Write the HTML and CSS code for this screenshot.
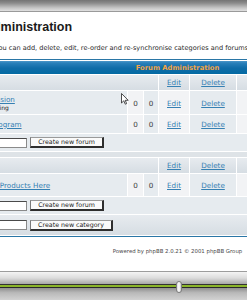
FILE: index.html
```html
<!DOCTYPE html>
<html>
<head>
<meta charset="utf-8">
<title>Forum Administration</title>
<link rel="stylesheet" href="styles.css">
</head>
<body>
<div class="screen">
  <div class="topbar"></div>
  <div class="viewport">
    <div class="page">
      <h1 class="title">Forum Administration</h1>
      <p class="intro">From this panel you can add, delete, edit, re-order and re-synchronise categories and forums in your board</p>
      <table class="forumline">
        <colgroup>
          <col class="c-name"><col class="c-num"><col class="c-num2"><col class="c-edit"><col class="c-del"><col class="c-move"><col class="c-sync">
        </colgroup>
        <tr><th colspan="7">Forum Administration</th></tr>
        <tr class="cat">
          <td colspan="3" class="cat-title"><a href="#">General</a></td>
          <td class="center"><a href="#">Edit</a></td>
          <td class="center"><a href="#">Delete</a></td>
          <td class="center"><a href="#">Move up</a> <a href="#">Move down</a></td>
          <td>&nbsp;</td>
        </tr>
        <tr class="forum forum-a">
          <td class="row2"><a href="#" class="fname">General Discussion</a><span class="fdesc">Chat and advertising</span></td>
          <td class="row1 center num">0</td>
          <td class="row2 center num">0</td>
          <td class="row1 center"><a href="#">Edit</a></td>
          <td class="row2 center"><a href="#">Delete</a></td>
          <td class="row1 center"><a href="#">Move up</a><br><a href="#">Move down</a></td>
          <td class="row2 center"><a href="#">Resync</a></td>
        </tr>
        <tr class="forum forum-b">
          <td class="row2"><a href="#" class="fname">Our Affiliate Program</a></td>
          <td class="row1 center num">0</td>
          <td class="row2 center num">0</td>
          <td class="row1 center"><a href="#">Edit</a></td>
          <td class="row2 center"><a href="#">Delete</a></td>
          <td class="row1 center"><a href="#">Move up</a> <a href="#">Move down</a></td>
          <td class="row2 center"><a href="#">Resync</a></td>
        </tr>
        <tr class="add-row">
          <td colspan="7" class="row2"><div class="addform"><input class="post" type="text"><button class="liteoption btn-forum" type="button">Create new forum</button></div></td>
        </tr>
        <tr class="space-row"><td colspan="7"></td></tr>
        <tr class="cat">
          <td colspan="3" class="cat-title"><a href="#">Shop</a></td>
          <td class="center"><a href="#">Edit</a></td>
          <td class="center"><a href="#">Delete</a></td>
          <td class="center"><a href="#">Move up</a> <a href="#">Move down</a></td>
          <td>&nbsp;</td>
        </tr>
        <tr class="forum forum-c">
          <td class="row2"><a href="#" class="fname">Buy and Trade Products Here</a></td>
          <td class="row1 center num">0</td>
          <td class="row2 center num">0</td>
          <td class="row1 center"><a href="#">Edit</a></td>
          <td class="row2 center"><a href="#">Delete</a></td>
          <td class="row1 center"><a href="#">Move up</a><br><a href="#">Move down</a></td>
          <td class="row2 center"><a href="#">Resync</a></td>
        </tr>
        <tr class="add-row">
          <td colspan="7" class="row2"><div class="addform"><input class="post" type="text"><button class="liteoption btn-forum" type="button">Create new forum</button></div></td>
        </tr>
        <tr class="cat-bottom">
          <td colspan="7"><div class="addform"><input class="post" type="text"><button class="liteoption btn-cat" type="button">Create new category</button></div></td>
        </tr>
      </table>
      <div class="copyright">Powered by phpBB 2.0.21 © 2001 phpBB Group</div>
    </div>
    <svg class="cursor" width="8" height="12" viewBox="0 0 8 12">
      <path d="M0.5 0.5 L0.5 10 L2.8 7.8 L4.3 11.2 L5.6 10.6 L4.2 7.3 L7.2 7.3 Z" fill="#fff" stroke="#222" stroke-width="0.8" stroke-linejoin="round"/>
    </svg>
  </div>
  <div class="player">
    <div class="player-top"></div>
    <div class="track"></div>
    <div class="player-bottom"></div>
    <div class="knob"></div>
  </div>
</div>
</body>
</html>
```
FILE: styles.css
```css
* { box-sizing: border-box; }
html, body { margin: 0; padding: 0; background: #fff; overflow: hidden; }

.screen {
  width: 247px;
  height: 300px;
  display: flex;
  flex-direction: column;
  overflow: hidden;
  position: relative;
}

.topbar {
  flex: none;
  height: 12px;
  background: linear-gradient(#747474 0, #8a8a8a 3px, #c6c6c6 8px, #e0e0e0 11px);
  border-bottom: 1px solid #9a9a9a;
}

.viewport {
  flex: none;
  height: 259px;
  overflow: hidden;
  position: relative;
  background: #fff;
}

.page {
  width: 471px;
  margin-left: -58px;
  font-family: "DejaVu Sans", Verdana, sans-serif;
  color: #222;
}

.title {
  margin: 8px 0 0;
  font: bold 12.5px/14px "Liberation Sans", Arial, sans-serif;
  color: #1a1a1a;
}

.intro {
  margin: 10px 0 0;
  font-size: 6.57px;
  line-height: 8px;
  white-space: nowrap;
  color: #2a2a2a;
}

.forumline {
  margin-top: 7px;
  width: 471px;
  table-layout: fixed;
  border: 1px solid #2a76a6;
  border-spacing: 1px;
  background: #fff;
  font-size: 7.2px;
  line-height: 8px;
}

.c-name { width: 183px; }
.c-num { width: 15px; }
.c-num2 { width: 14px; }
.c-edit { width: 30px; }
.c-del { width: 46px; }
.c-move { width: 100px; }
.c-sync { width: 73px; }

.forumline td, .forumline th {
  padding: 0 2px;
  vertical-align: middle;
  white-space: nowrap;
  overflow: hidden;
}

.forumline th {
  height: 13px;
  padding: 0;
  text-align: center;
  background: linear-gradient(#4d97c9 0, #2a80ba 2px, #0f6ca8 7px, #036aa3 13px);
  color: #f2a446;
  font-size: 6.8px;
  font-weight: bold;
}

.forumline a { color: #3580b3; text-decoration: underline; }

.center { text-align: center; }
.num { color: #3a3a3a; }

.cat td {
  height: 15px;
  background: linear-gradient(#e7ebef, #d6dde3);
}

.cat-title a { font-weight: bold; }

.row1 { background: #f2f3f5; }
.row2 { background: #e6ebef; }

.forum-a td { height: 23px; padding-top: 2px; }
.forum-b td { height: 18px; padding-top: 1px; }
.forum-c td { height: 22px; padding-top: 1px; }

.fname { display: block; }
.fdesc {
  display: block;
  font-size: 6px;
  line-height: 7px;
  color: #1a1a1a;
}

.add-row td { height: 17px; }

.space-row td {
  height: 5px;
  background: #dee3e7;
}

.cat-bottom td {
  height: 20px;
  background: linear-gradient(#e7ebef, #d6dde3);
}

.addform {
  display: flex;
  align-items: center;
  gap: 3px;
}

.post {
  width: 81px;
  height: 10px;
  padding: 0;
  margin: 0;
  background: #fff;
  border: 1px solid #8a8a8a;
  border-top-color: #4a4a4a;
  border-left-color: #5a5a5a;
}

.liteoption {
  height: 11px;
  padding: 0;
  margin: 0;
  background: #fafafa;
  font-family: "DejaVu Sans", Verdana, sans-serif;
  font-size: 6.3px;
  line-height: 8px;
  color: #1a1a1a;
  border-style: solid;
  border-width: 1px 2px 2px 1px;
  border-color: #9a9a9a #2e2e2e #2e2e2e #7a7a7a;
  text-align: center;
}

.btn-forum { width: 74px; }
.btn-cat { width: 83px; }

.copyright {
  margin-top: 11px;
  text-align: center;
  font-size: 5.4px;
  line-height: 7px;
  color: #4a4a4a;
}

.cursor {
  position: absolute;
  left: 121px;
  top: 81px;
}

.player {
  flex: 1;
  position: relative;
  display: flex;
  flex-direction: column;
  border-top: 1px solid #9c9c9c;
}

.player-top {
  flex: none;
  height: 12px;
  background: linear-gradient(#f4f4f4, #dcdcdc 50%, #a8a8a8);
}

.track {
  flex: none;
  height: 4px;
  background: #8bb52a;
  border-top: 1px solid #333;
  border-bottom: 1px solid #2a2a2a;
}

.player-bottom {
  flex: 1;
  background: linear-gradient(#8f8f8f, #b9b9b9 40%, #d2d2d2);
}

.knob {
  position: absolute;
  left: 176px;
  top: 9px;
  width: 6px;
  height: 12px;
  border-radius: 3px;
  border: 1px solid #7d7d7d;
  background: linear-gradient(90deg, #d8d8d8, #ffffff 50%, #c8c8c8);
}
```
